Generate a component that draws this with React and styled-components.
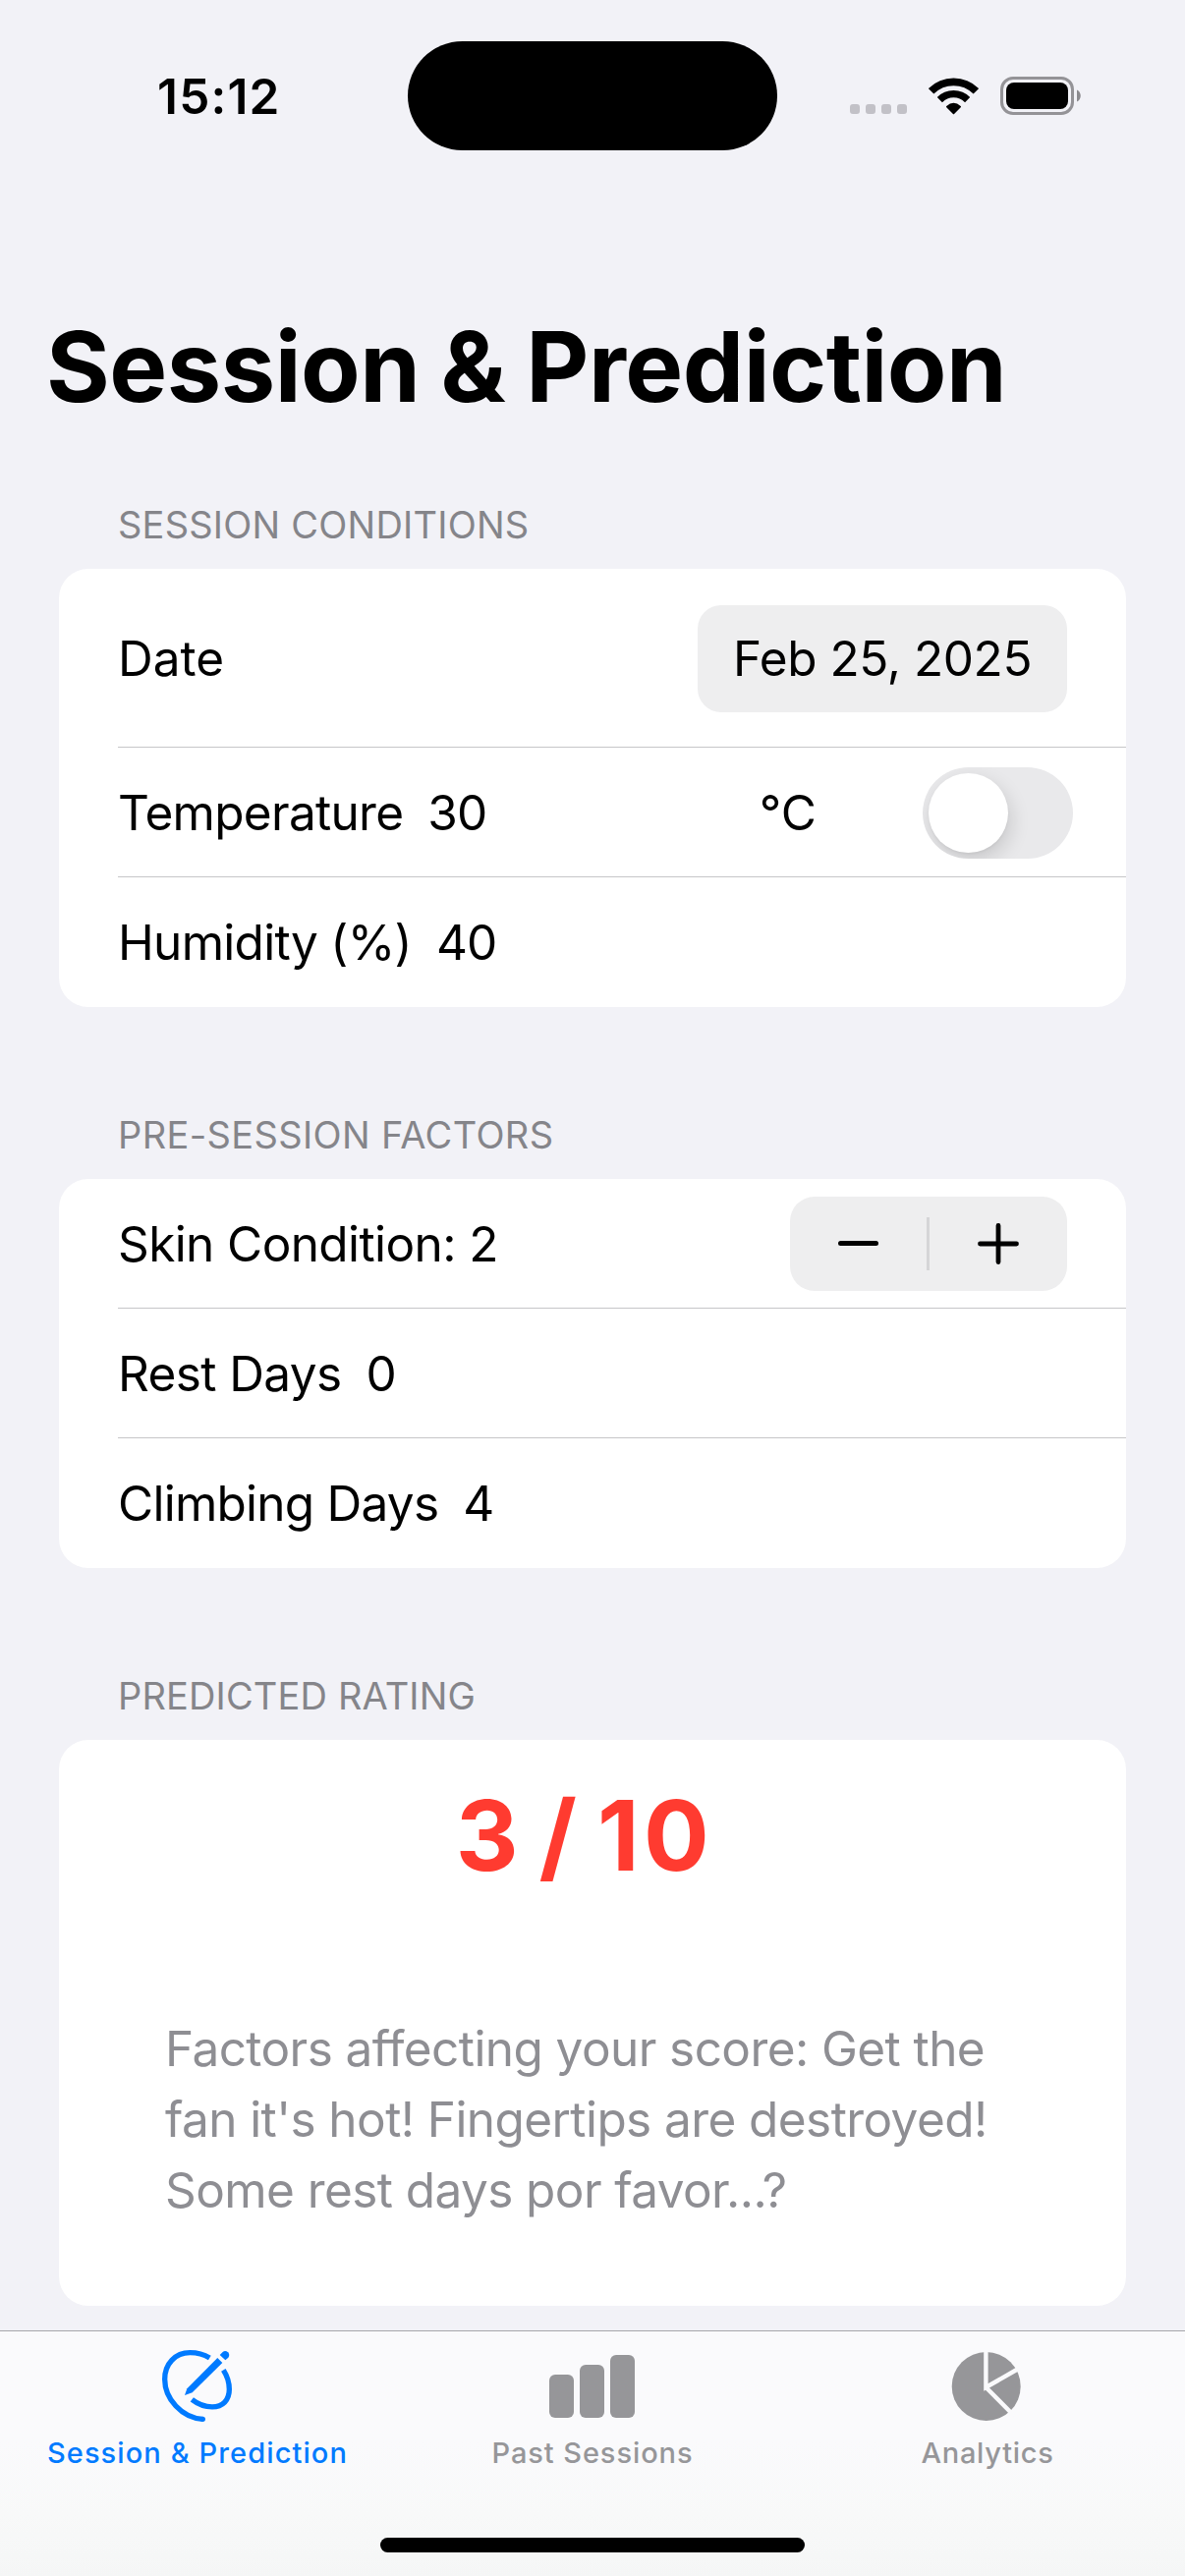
import React from "react";
import styled, { createGlobalStyle } from "styled-components";

const GlobalStyle = createGlobalStyle`
  * { box-sizing: border-box; }
  body {
    margin: 0;
    background: #f2f2f7;
    font-family: Inter, "Liberation Sans", sans-serif;
    -webkit-font-smoothing: antialiased;
  }
`;

const Screen = styled.main`
  display: flex;
  flex-direction: column;
  width: 1206px;
  height: 2622px;
  overflow: hidden;
  background: #f2f2f7;
  color: #000;
`;

/* Status bar */
const StatusBar = styled.header`
  display: grid;
  grid-template-columns: 415px 376px 415px;
  align-items: center;
  height: 194px;
  margin-bottom: 1px;
  flex: none;
`;

const Clock = styled.time`
  padding: 2px 0 0 160px;
  font-size: 49.5px;
  font-weight: 600;
  line-height: 60px;
  letter-spacing: 1.2px;
`;

const Island = styled.div`
  height: 111px;
  border-radius: 56px;
  background: #000;
`;

const StatusIcons = styled.div`
  display: flex;
  align-items: center;
  gap: 22px;
  padding: 1px 0 0 74px;
  svg { display: block; flex: none; }
`;

const SignalDots = styled.div`
  display: flex;
  gap: 6px;
  margin-top: 27px;
`;

const SignalDot = styled.i`
  width: 10px;
  height: 10px;
  border-radius: 3px;
  background: #c2c1c7;
`;

/* Page content */
const Content = styled.div`
  display: flex;
  flex-direction: column;
  flex: 1;
  min-height: 0;
  padding: 117px 60px 0;
`;

const Title = styled.h1`
  margin: 0 0 0 -13px;
  font-size: 99px;
  font-weight: 700;
  line-height: 122px;
  letter-spacing: -0.5px;
  word-spacing: -2px;
  white-space: nowrap;
`;

const Section = styled.section`
  margin-top: ${(p) => (p.$first ? 76 : 106)}px;
`;

const SectionTitle = styled.h2`
  margin: 0 0 21px 60px;
  font-size: 38px;
  font-weight: 400;
  line-height: 48px;
  letter-spacing: ${(p) => p.$track}px;
  color: #85858a;
`;

const Card = styled.div`
  padding-left: 60px;
  border-radius: 30px;
  background: #fff;
`;

const Row = styled.div`
  display: flex;
  align-items: center;
  height: ${(p) => p.$height || 132}px;
  padding-right: ${(p) => p.$inset || 60}px;
  font-size: 49.5px;
  line-height: 60px;
  border-bottom: 1px solid #c6c6c8;
  &:last-child { border-bottom: 0; }
`;

const Label = styled.span`
  letter-spacing: ${(p) => p.$track ?? -0.6}px;
  white-space: nowrap;
`;

const Value = styled.span`
  margin-left: 25px;
  letter-spacing: -1px;
`;

const Trailing = styled.div`
  display: flex;
  align-items: center;
  gap: 108px;
  margin-left: auto;
`;

const DateButton = styled.button`
  width: 376px;
  height: 109px;
  margin: 1px 0 0 auto;
  padding: 0;
  border: 0;
  border-radius: 24px;
  background: #eeeeef;
  color: #000;
  font: 400 49.5px/109px Inter, "Liberation Sans", sans-serif;
  letter-spacing: -0.42px;
`;

const Toggle = styled.div`
  display: flex;
  align-items: center;
  width: 153px;
  height: 93px;
  margin-top: 2px;
  padding: 6px;
  overflow: hidden;
  border-radius: 47px;
  background: #e9e9eb;
`;

const Knob = styled.div`
  width: 81px;
  height: 81px;
  border-radius: 50%;
  background: #fff;
  box-shadow: 3px 8px 20px rgba(0, 0, 0, 0.14), 0 2px 3px rgba(0, 0, 0, 0.04);
`;

const Stepper = styled.div`
  display: grid;
  grid-template-columns: 139px 3px 140px;
  align-items: center;
  height: 96px;
  margin-left: auto;
  border-radius: 25px;
  background: #eeeeef;
`;

const StepButton = styled.button`
  display: flex;
  align-items: center;
  justify-content: center;
  height: 100%;
  padding: 0;
  border: 0;
  background: none;
`;

const StepDivider = styled.i`
  height: 54px;
  background: #d5d5d7;
`;

const RatingCard = styled(Card)`
  height: 576px;
  padding: 36px 60px 0;
`;

const Rating = styled.div`
  margin-right: 16px;
  font-size: 99px;
  font-weight: 700;
  line-height: 122px;
  letter-spacing: 4.5px;
  word-spacing: -11.5px;
  text-align: center;
  color: #ff3b30;
`;

const Factors = styled.p`
  margin: 120px 0 0 48px;
  font-size: 49.5px;
  line-height: 72px;
  letter-spacing: -0.58px;
  white-space: nowrap;
  color: #8e8e93;
`;

/* Tab bar */
const TabBar = styled.nav`
  display: flex;
  flex-direction: column;
  align-items: center;
  flex: none;
  height: 250px;
  padding-top: 7px;
  border-top: 1px solid #a7a7ab;
  background: linear-gradient(#fafafc 0%, #fafafc 45%, #f8f9f9 75%, #f5f6f6 100%);
`;

const Tabs = styled.div`
  display: grid;
  grid-template-columns: repeat(3, 402px);
`;

const Tab = styled.a`
  display: flex;
  flex-direction: column;
  align-items: center;
  height: 135px;
  color: ${(p) => (p.$active ? "#007aff" : "#969699")};
  svg { display: block; flex: none; }
`;

const TabLabel = styled.span`
  margin-top: -1px;
  font-size: 29px;
  font-weight: 500;
  line-height: 36px;
  letter-spacing: ${(p) => p.$track}px;
  white-space: nowrap;
`;

const HomeIndicator = styled.div`
  width: 432px;
  height: 15px;
  margin-top: 68px;
  border-radius: 8px;
  background: #000;
`;

const WifiIcon = () => (
  <svg width="51" height="38" viewBox="315 86 153 114" fill="none" stroke="#000">
    <path d="M322.9 127.4A97 97 0 0 1 460.1 127.4" strokeWidth="23" />
    <path d="M349.1 153.6A60 60 0 0 1 433.9 153.6" strokeWidth="22" />
    <path d="M391.5 195L371.5 175Q391.5 157 411.5 175Z" fill="#000" strokeWidth="5" strokeLinejoin="round" />
  </svg>
);

const BatteryIcon = () => (
  <svg width="83" height="39" viewBox="0 0 83 39">
    <rect x="1.5" y="1.5" width="72" height="36" rx="11.5" fill="none" stroke="#949397" strokeWidth="3" />
    <rect x="6" y="6" width="63" height="27" rx="8" />
    <path d="M78 13.5C83 15.5 83 23.5 78 25.5Z" fill="#8b8a8e" />
  </svg>
);

const MinusIcon = () => (
  <svg width="41" height="41" viewBox="0 0 41 41" stroke="#000" strokeWidth="5" strokeLinecap="round">
    <path d="M2.5 20.5H38.5" />
  </svg>
);

const PlusIcon = () => (
  <svg width="42" height="42" viewBox="0 0 42 42" stroke="#000" strokeWidth="4.8" strokeLinecap="round">
    <path d="M2.5 21H39.5M21 2.5V39.5" />
  </svg>
);

const PencilOutlineIcon = () => (
  <svg width="100" height="100" viewBox="3 0 300 300" fill="none" stroke="currentColor" strokeWidth="16">
    <path d="M190 60C172 49 152 44 130 44C85 44 53 78 53 125C53 185 105 243 169 247" />
    <circle cx="169" cy="247" r="8" fill="currentColor" stroke="none" />
    <path d="M232 97C243 114 250 136 250 156C250 189 230 209.5 198 209.5C174 209.5 154 201 136 187" />
    <path d="M114 174L121 154L214 60L229 75L137 166Z" fill="currentColor" stroke="none" />
    <path d="M221 51L230 42Q238 36 246 43Q253 51 247 59L238 67Z" fill="currentColor" stroke="none" />
  </svg>
);

const BarsIcon = () => (
  <svg width="100" height="100" viewBox="0 0 100 100" fill="currentColor">
    <rect x="6" y="37" width="25" height="44" rx="6" />
    <rect x="37" y="27" width="25" height="54" rx="6" />
    <rect x="68" y="17" width="25" height="64" rx="6" />
  </svg>
);

const PieIcon = () => (
  <svg width="100" height="100" viewBox="0 0 100 100">
    <circle cx="48.7" cy="49" r="35" fill="currentColor" />
    <path d="M48.4 10V50L83.2 30M48.4 50L77.200 79" fill="none" stroke="#fafafc" strokeWidth="4.4" />
  </svg>
);

export default function App() {
  return (
    <>
      <GlobalStyle />
      <Screen>
        <StatusBar>
          <Clock>15:12</Clock>
          <Island />
          <StatusIcons>
            <SignalDots>
              <SignalDot />
              <SignalDot />
              <SignalDot />
              <SignalDot />
            </SignalDots>
            <WifiIcon />
            <BatteryIcon />
          </StatusIcons>
        </StatusBar>

        <Content>
          <Title>Session &amp; Prediction</Title>

          <Section $first>
            <SectionTitle $track={0.22}>SESSION CONDITIONS</SectionTitle>
            <Card>
              <Row $height={182}>
                <Label $track={0}>Date</Label>
                <DateButton>Feb 25, 2025</DateButton>
              </Row>
              <Row $inset={54}>
                <Label $track={-0.7}>Temperature</Label>
                <Value>30</Value>
                <Trailing>
                  <Label $track={0}>°C</Label>
                  <Toggle>
                    <Knob />
                  </Toggle>
                </Trailing>
              </Row>
              <Row>
                <Label $track={-0.7}>Humidity (%)</Label>
                <Value>40</Value>
              </Row>
            </Card>
          </Section>

          <Section>
            <SectionTitle $track={0.36}>PRE-SESSION FACTORS</SectionTitle>
            <Card>
              <Row>
                <Label>Skin Condition: 2</Label>
                <Stepper>
                  <StepButton aria-label="Decrement">
                    <MinusIcon />
                  </StepButton>
                  <StepDivider />
                  <StepButton aria-label="Increment">
                    <PlusIcon />
                  </StepButton>
                </Stepper>
              </Row>
              <Row>
                <Label>Rest Days</Label>
                <Value>0</Value>
              </Row>
              <Row>
                <Label $track={-0.75}>Climbing Days</Label>
                <Value>4</Value>
              </Row>
            </Card>
          </Section>

          <Section>
            <SectionTitle $track={0.15}>PREDICTED RATING</SectionTitle>
            <RatingCard>
              <Rating>3 / 10</Rating>
              <Factors>
                Factors affecting your score: Get the
                <br />
                fan it's hot! Fingertips are destroyed!
                <br />
                Some rest days por favor...?
              </Factors>
            </RatingCard>
          </Section>
        </Content>

        <TabBar>
          <Tabs>
            <Tab $active>
              <PencilOutlineIcon />
              <TabLabel $track={1.1}>Session &amp; Prediction</TabLabel>
            </Tab>
            <Tab>
              <BarsIcon />
              <TabLabel $track={0.92}>Past Sessions</TabLabel>
            </Tab>
            <Tab>
              <PieIcon />
              <TabLabel $track={0.72}>Analytics</TabLabel>
            </Tab>
          </Tabs>
          <HomeIndicator />
        </TabBar>
      </Screen>
    </>
  );
}
